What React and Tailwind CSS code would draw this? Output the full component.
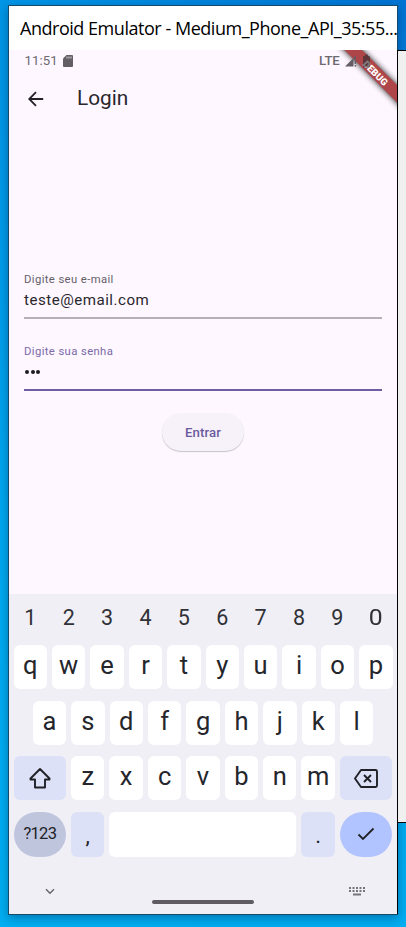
import React from "react";

function Key({ children, className = "", shift = "" }) {
  return (
    <div className={`flex h-[44px] w-[33.4px] shrink-0 items-center justify-center rounded-[6px] bg-white ${className}`}>
      <span className={`text-[25.5px] leading-none text-[#25262c] ${shift}`}>{children}</span>
    </div>
  );
}

function TitleBar() {
  return (
    <div className="flex h-[44px] shrink-0 items-center bg-white pl-[11px]">
      <span className="whitespace-nowrap font-['Open_Sans',sans-serif] text-[18px] leading-[24px] tracking-[-0.47px] text-black">
        Android Emulator - Medium_Phone_API_35:55...
      </span>
    </div>
  );
}

function DebugBanner() {
  return (
    <svg className="absolute top-0 right-0" width="80" height="80" viewBox="-16 0 80 80">
      <defs>
        <filter id="shade" filterUnits="userSpaceOnUse" x="-30" y="-30" width="130" height="130">
          <feGaussianBlur stdDeviation="3" />
        </filter>
      </defs>
      <path d="M1.500 -10H19L74 45V62.500Z" fill="#000" opacity=".9" filter="url(#shade)" />
      <path d="M11.500 0H29L64 35V52.500Z" fill="#ad4549" />
      <text x="42.500" y="26.500" transform="rotate(45 42.500 23)" textAnchor="middle" fill="#fff" fontFamily="Roboto, sans-serif" fontSize="9.600" fontWeight="900">
        DEBUG
      </text>
    </svg>
  );
}

function StatusBar() {
  return (
    <div className="relative z-10 flex h-[22px] shrink-0 items-center pl-[15.500px] text-[13.200px] text-[#6d696f]">
      <span className="w-[38.500px] leading-none tracking-[0.1px]">11:51</span>
      <svg width="10" height="12" viewBox="0 0 10 12" fill="#625e64">
        <path d="M3.500 0H9q1 0 1 1v10q0 1-1 1H1q-1 0-1-1V3.500Z" />
        <path d="M3.500 1.500h1v2h-1zM5.500 1.500h1v2h-1zM7.500 1.500h1v2h-1z" fill="#d8d3d9" />
      </svg>
      <span className="ml-[246px] w-[26px] leading-none font-medium tracking-[-0.1px]">LTE</span>
      <svg className="relative" width="26" height="14" viewBox="0 0 26 14">
        <path d="M0 12.500 11 1.500V5H8.500V12.500Z" fill="#625e64" />
        <path d="M9.700 5.500h1.500v4.500H9.700zM9.700 11h1.500v1.500H9.700z" fill="#625e64" />
        <path d="M20 .5h3V2h1q1 0 1 1v9.500q0 1-1 1h-5q-1 0-1-1V3q0-1 1-1h1Z" fill="#302c31" opacity=".62" />
      </svg>
    </div>
  );
}

function LoginScreen() {
  return (
    <div className="relative flex h-[544px] shrink-0 flex-col overflow-hidden bg-[#fef7ff]">
      <DebugBanner />
      <StatusBar />
      <header className="flex h-[53px] shrink-0 items-center pl-[19px]">
        <svg width="16" height="16" viewBox="0 0 16 16" fill="none" stroke="#242126" strokeWidth="1.800">
          <path d="M15.200 8H1.500M8 1.200 1.200 8 8 14.800" />
        </svg>
        <h1 className="ml-[33px] text-[20.800px] leading-none text-[#2a272c]">Login</h1>
      </header>
      <form className="mt-[147px] flex flex-col px-[15px]">
        <label className="h-[18px] text-[11.300px] leading-[15px] tracking-[0.38px] text-[#655f69]">Digite seu e-mail</label>
        <div className="h-[29px] border-b-2 border-[#b5afb9] text-[15.100px] leading-[20px] tracking-[0.5px] text-[#29262c]">teste@email.com</div>
        <label className="mt-[25px] h-[18px] text-[11.300px] leading-[15px] tracking-[0.38px] text-[#796aa8]">Digite sua senha</label>
        <div className="flex h-[29px] gap-[1.700px] border-b-2 border-[#6f5fa2] pt-[7.500px] pl-[1px]">
          <i className="size-[4px] rounded-full bg-[#1d1b20]" />
          <i className="size-[4px] rounded-full bg-[#1d1b20]" />
          <i className="size-[4px] rounded-full bg-[#1d1b20]" />
        </div>
        <button type="button" className="mt-[22px] ml-[138px] flex h-[38px] w-[82px] items-center justify-center rounded-full bg-[#f7f2fa] pt-px text-[13.200px] font-medium tracking-[0.1px] text-[#6b5a9f] shadow-[0_1px_1px_rgba(0,0,0,0.22)]">
          Entrar
        </button>
      </form>
    </div>
  );
}

function Keyboard() {
  return (
    <div className="flex h-[320px] shrink-0 flex-col bg-[#f0eff6] pl-[4.600px]">
      <div className="flex h-[51px] gap-[5px] pt-px">
        {[..."1234567890"].map((n) => (
          <span key={n} className={`flex w-[33.400px] shrink-0 items-center justify-center pb-[4px] text-[21.500px] leading-none text-[#303137] ${n === "0" ? "scale-x-115" : ""}`}>{n}</span>
        ))}
      </div>
      <div className="flex gap-[5px]">
        {[..."qwertyuiop"].map((k) => <Key key={k} shift="-mt-[2px]">{k}</Key>)}
      </div>
      <div className="mt-[11.600px] flex gap-[5px] pl-[19.200px]">
        {[..."asdfghjkl"].map((k) => <Key key={k} shift="-mt-[2px]">{k}</Key>)}
      </div>
      <div className="mt-[11.600px] flex gap-[5px]">
        <div className="flex h-[44px] w-[52.500px] shrink-0 items-center justify-center rounded-[6px] bg-[#dde1f7]">
          <svg width="22" height="21" viewBox="0 0 22 21" fill="none" stroke="#202127" strokeWidth="1.900" strokeLinejoin="round">
            <path d="M11 1 20.500 10.500V11.500H16V19.500H6V11.500H1.500V10.500Z" />
          </svg>
        </div>
        {[..."zxcvbnm"].map((k) => <Key key={k} shift="-mt-[2px]">{k}</Key>)}
        <div className="flex h-[44px] w-[52.500px] shrink-0 items-center justify-center rounded-[6px] bg-[#dde1f7]">
          <svg width="24" height="19" viewBox="0 0 24 19" fill="none" stroke="#202127" strokeWidth="1.900" strokeLinejoin="round">
            <path d="M7 1H21.500Q23 1 23 2.500V16.500Q23 18 21.500 18H7L1 9.500ZM10 6l7 7M17 6l-7 7" />
          </svg>
        </div>
      </div>
      <div className="mt-[11.600px] flex gap-[5px]">
        <div className="flex h-[45px] w-[52.500px] shrink-0 items-center justify-center rounded-[23px] bg-[#c0c5de] text-[16.500px] tracking-[-0.700px] text-[#202127]">?123</div>
        <Key className="h-[45px]! bg-[#dde1f7]!" shift="mt-[3px] text-[22px]!">,</Key>
        <div className="h-[45px] w-[187px] shrink-0 rounded-[6px] bg-white" />
        <Key className="h-[45px]! bg-[#dde1f7]!" shift="mt-[3px] text-[22px]!">.</Key>
        <div className="flex h-[45px] w-[52.500px] shrink-0 items-center justify-center rounded-[23px] bg-[#b2c4ff]">
          <svg width="18" height="14" viewBox="0 0 18 14" fill="none" stroke="#202127" strokeWidth="1.800">
            <path d="m1.500 7.500 4.500 4.500L16.500 1.500" />
          </svg>
        </div>
      </div>
      <div className="flex pt-[29px]">
        <svg className="mt-[2px] ml-[31px]" width="10" height="7" viewBox="0 0 10 7" fill="none" stroke="#66646b" strokeWidth="1.400">
          <path d="m1 1.200 4 4 4-4" />
        </svg>
        <div className="mt-[14px] ml-[97.500px] h-[4px] w-[102px] rounded-full bg-[#5e5b62]" />
        <svg className="ml-[94.500px]" width="16" height="10" viewBox="0 0 16 10" fill="none" stroke="#77747c" strokeWidth="2">
          <path d="M0 2H16M0 5H16" strokeDasharray="2 1.500" />
          <path d="M4 8.500h8" />
        </svg>
      </div>
    </div>
  );
}

export default function App() {
  return (
    <div className="flex h-[927px] w-[406px] overflow-hidden bg-[radial-gradient(circle_at_100%_0%,#0074d4_0%,#0096e6_40%,#00a8ef_65%,#00aef1_100%)] pt-[5px] font-[Roboto,sans-serif]">
      <main className="relative z-10 ml-[8px] flex h-[910px] w-[390px] shrink-0 flex-col border border-[#154b68] shadow-[0_3px_9px_rgba(0,35,75,0.4)]">
        <TitleBar />
        <LoginScreen />
        <Keyboard />
        <div className="absolute top-[44px] -right-px bottom-0 w-px bg-black" />
      </main>
      <aside className="relative z-20 mt-[45px] h-[773px] w-[8px] shrink-0 border-y border-black bg-[#f0f0f0]" />
    </div>
  );
}
